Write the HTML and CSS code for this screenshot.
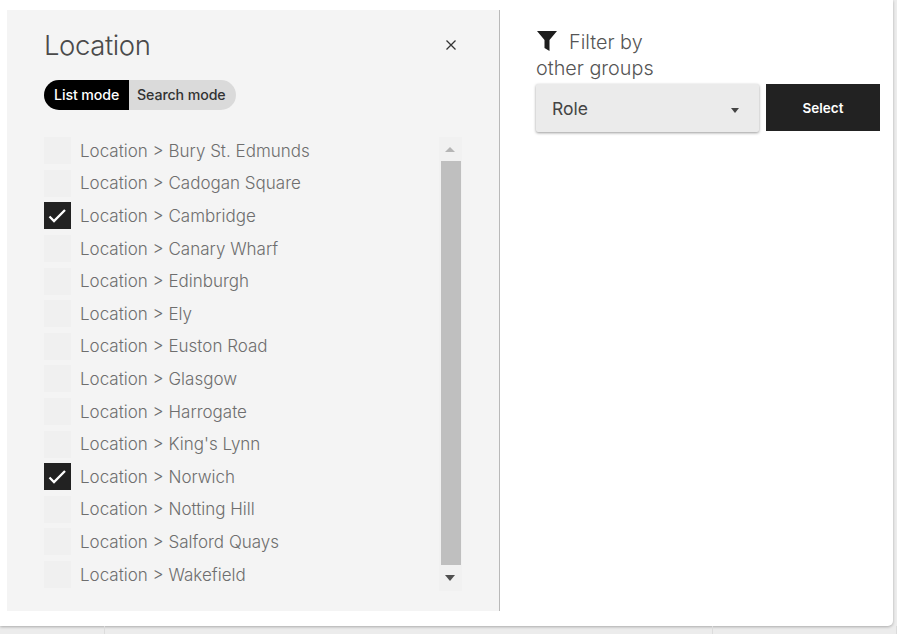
FILE: index.html
```html
<!DOCTYPE html>
<html lang="en">
<head>
<meta charset="utf-8">
<title>Location filter</title>
<link rel="stylesheet" href="styles.css">
</head>
<body>
<div class="card">
  <section class="panel">
    <header class="panel-head">
      <h1 class="panel-title">Location</h1>
      <svg class="close" viewBox="0 0 12 12" width="12" height="12"><path d="M1.500 1.500l9 9M10.500 1.500l-9 9" stroke="#333" stroke-width="1.300" fill="none"/></svg>
    </header>
    <div class="modes">
      <span class="mode mode-on">List mode</span>
      <span class="mode">Search mode</span>
    </div>
    <div class="list-wrap">
      <ul class="list">
        <li class="row"><span class="box"></span>Location &gt; Bury St. Edmunds</li>
        <li class="row"><span class="box"></span>Location &gt; Cadogan Square</li>
        <li class="row"><span class="box box-on"><svg viewBox="0 0 27 27" width="27" height="27"><path d="M5.500 14.500l4.500 4.500 11-11" stroke="#fff" stroke-width="2.300" fill="none"/></svg></span>Location &gt; Cambridge</li>
        <li class="row"><span class="box"></span>Location &gt; Canary Wharf</li>
        <li class="row"><span class="box"></span>Location &gt; Edinburgh</li>
        <li class="row"><span class="box"></span>Location &gt; Ely</li>
        <li class="row"><span class="box"></span>Location &gt; Euston Road</li>
        <li class="row"><span class="box"></span>Location &gt; Glasgow</li>
        <li class="row"><span class="box"></span>Location &gt; Harrogate</li>
        <li class="row"><span class="box"></span>Location &gt; King's Lynn</li>
        <li class="row"><span class="box box-on"><svg viewBox="0 0 27 27" width="27" height="27"><path d="M5.500 14.500l4.500 4.500 11-11" stroke="#fff" stroke-width="2.300" fill="none"/></svg></span>Location &gt; Norwich</li>
        <li class="row"><span class="box"></span>Location &gt; Notting Hill</li>
        <li class="row"><span class="box"></span>Location &gt; Salford Quays</li>
        <li class="row"><span class="box"></span>Location &gt; Wakefield</li>
      </ul>
      <div class="scrollbar">
        <span class="arrow arrow-up"></span>
        <span class="thumb"></span>
        <span class="arrow arrow-down"></span>
      </div>
    </div>
  </section>
  <aside class="side">
    <p class="filter-label"><svg class="funnel" viewBox="0 0 20 20" width="20" height="20"><path d="M0 0h20l-7.500 9v11l-5-3v-8z" fill="#1d1d1d"/></svg><span class="filter-first">Filter by</span><br>other groups</p>
    <div class="controls">
      <div class="select"><span>Role</span><span class="caret"></span></div>
      <button class="btn" type="button">Select</button>
    </div>
  </aside>
</div>
<div class="strip"><span class="cell cell-a"></span><span class="cell cell-b"></span><span class="cell"></span></div>
</body>
</html>
```
FILE: styles.css
```css
* { box-sizing: border-box; }
html, body { margin: 0; height: 100%; }
body {
  background: #ececec;
  font-family: Inter, "Liberation Sans", Arial, sans-serif;
  width: 897px;
  height: 634px;
  overflow: hidden;
}
.card {
  width: 893px;
  height: 626px;
  background: #fff;
  border-bottom-right-radius: 5px;
  box-shadow: 0 1px 3px rgba(0,0,0,.28);
  padding: 10px 0 15px 7px;
  display: flex;
}
.panel {
  width: 493px;
  background: #f4f4f4;
  border-right: 1px solid #b9b9b9;
  padding: 0 36px 0 37px;
  display: flex;
  flex-direction: column;
}
.panel-head {
  display: flex;
  justify-content: space-between;
  align-items: center;
  height: 36px;
  margin-top: 17px;
}
.panel-title {
  margin: 0;
  font-weight: 300;
  font-size: 27.500px;
  letter-spacing: -0.4px;
  color: #4a4a4a;
}
.close { margin-right: 6px; }
.modes {
  display: flex;
  width: 192px;
  height: 30px;
  margin-top: 17px;
  background: #dadada;
  border-radius: 15px;
  overflow: hidden;
  font-size: 14.200px;
  font-weight: 500;
  line-height: 30px;
  letter-spacing: -0.1px;
}
.mode { padding: 0 8px; color: #333; white-space: nowrap; }
.mode-on { background: #000; color: #fff; width: 85px; padding: 0 0 0 10px; flex: none; }
.list-wrap {
  display: flex;
  justify-content: space-between;
  margin-top: 27px;
}
.list { list-style: none; margin: -2.500px 0 0; padding: 0; }
.row {
  display: flex;
  align-items: center;
  height: 32.600px;
  font-weight: 300;
  font-size: 17px;
  color: #6e6e6e;
  white-space: nowrap;
}
.box {
  width: 27px;
  height: 27px;
  margin-right: 9px;
  background: #f0f0f0;
  flex: none;
}
.box-on { background: #222; }
.box svg { display: block; }
.scrollbar {
  width: 23px;
  height: 454px;
  margin-right: 1px;
  background: #f1f1f1;
  display: flex;
  flex-direction: column;
  align-items: center;
}
.arrow { position: relative; width: 100%; flex: none; height: 26px; }
.arrow-up { height: 24px; }
.arrow::after {
  content: "";
  position: absolute;
  left: 6px;
  top: 10px;
  border-left: 5.500px solid transparent;
  border-right: 5.500px solid transparent;
}
.arrow-up::after { border-bottom: 5px solid #b5b5b5; }
.arrow-down::after { border-top: 6px solid #505050; }
.thumb { width: 20px; height: 404px; background: #bfbfbf; flex: none; }
.side { padding: 19px 0 0 36px; }
.filter-label {
  margin: 0;
  font-weight: 300;
  font-size: 19.800px;
  line-height: 26px;
  color: #555;
}
.funnel { vertical-align: -2px; margin: 0 12px 0 1px; }
.controls { display: flex; gap: 7px; margin-top: 3px; }
.select {
  width: 223px;
  height: 48px;
  background: #ebebeb;
  border-radius: 2px;
  box-shadow: 0 1px 3px rgba(0,0,0,.4);
  padding: 1px 20px 0 16px;
  display: flex;
  align-items: center;
  justify-content: space-between;
  font-size: 17.500px;
  color: #444;
}
.caret {
  border-left: 4.500px solid transparent;
  border-right: 4.500px solid transparent;
  border-top: 5.500px solid #444;
  margin-top: 3px;
}
.btn {
  width: 114px;
  height: 47px;
  border: 0;
  background: #222;
  color: #fff;
  font-family: Inter, "Liberation Sans", Arial, sans-serif;
  font-size: 13.500px;
  font-weight: 600;
}
.strip { display: flex; height: 8px; }
.cell { border-right: 1px solid #dcdcdc; flex: 1; }
.cell-a { flex: none; width: 105px; }
.cell-b { flex: none; width: 608px; }
```
